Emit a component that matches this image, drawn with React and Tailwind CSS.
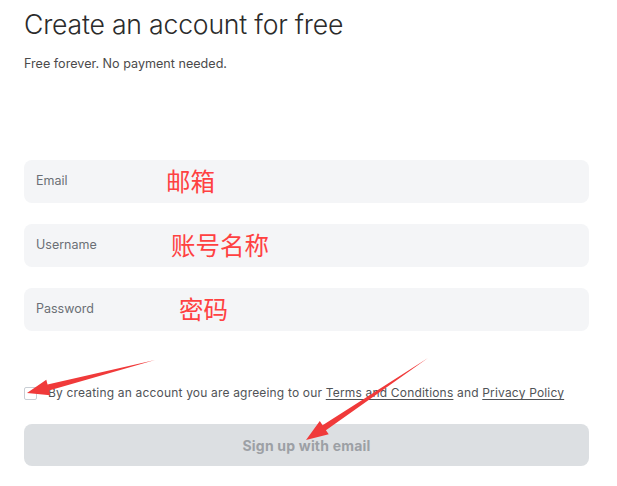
import React from "react";

const fields = [
    { label: "Email", note: "邮箱", noteClass: "ml-[10px]" },
    { label: "Username", note: "账号名称", noteClass: "ml-[15px]" },
    { label: "Password", note: "密码", noteClass: "ml-[23px]" },
];

const Arrow = ({ x1, y1, x2, y2 }) => {
    // tapered red annotation arrow pointing from (x1,y1) to (x2,y2)
    const dx = x2 - x1;
    const dy = y2 - y1;
    const len = Math.hypot(dx, dy);
    const ux = dx / len;
    const uy = dy / len;
    const px = -uy;
    const py = ux;
    const head = 22;
    const hx = x2 - ux * head;
    const hy = y2 - uy * head;
    const pts = [
        [x1, y1],
        [hx + px * 3, hy + py * 3],
        [hx + px * 8, hy + py * 8],
        [x2, y2],
        [hx - px * 8, hy - py * 8],
        [hx - px * 3, hy - py * 3],
    ];
    return (
        <polygon
            points={pts.map((p) => p.join(",")).join(" ")}
            fill="#f03a3a"
        />
    );
};

const App = () => {
    return (
        <div className="relative min-h-screen bg-white pl-6 pr-[28px] pt-[8px] font-['Inter',sans-serif]">
            {/* Header */}
            <h1 className="text-[26.6px] leading-[32px] font-light text-[#2b2b2b] tracking-[-0.2px]">
                Create an account for free
            </h1>
            <p className="mt-[16px] text-[12.6px] leading-4 text-[#4b4b4b]">
                Free forever. No payment needed.
            </p>

            {/* Fields */}
            <div className="mt-[88px] flex flex-col gap-[21px]">
                {fields.map((f) => (
                    <div
                        key={f.label}
                        className="flex h-[43px] items-center rounded-lg bg-[#f4f5f7] pl-3"
                    >
                        <span className="w-[120px] text-[12.5px] text-[#6b6f75]">{f.label}</span>
                        <span
                            className={`${f.noteClass} text-[24.5px] leading-none text-[#ff4141] font-['Noto_Sans_CJK_SC',sans-serif]`}
                        >
                            {f.note}
                        </span>
                    </div>
                ))}
            </div>

            {/* Terms */}
            <div className="mt-[53px] flex items-center gap-[11px]">
                <span className="h-[13px] w-[13px] rounded-[2px] border border-[#c9ced4] bg-white" />
                <p className="text-[12px] text-[#505357] tracking-[0.18px]">
                    By creating an account you are agreeing to our{" "}
                    <span className="underline underline-offset-2">Terms and Conditions</span> and{" "}
                    <span className="underline underline-offset-2">Privacy Policy</span>
                </p>
            </div>

            {/* Button */}
            <button className="mt-[22px] flex h-[42px] w-full items-center justify-center rounded-lg bg-[#dcdfe2] text-[14px] font-bold text-[#9ca0a5] tracking-[0.2px]">
                Sign up with email
            </button>

            {/* annotation arrows */}
            <svg className="pointer-events-none absolute left-0 top-0" width="617" height="486">
                <Arrow x1={155} y1={360} x2={27} y2={393} />
                <Arrow x1={428} y1={358} x2={306} y2={440} />
            </svg>
        </div>
    );
};

export default App;
